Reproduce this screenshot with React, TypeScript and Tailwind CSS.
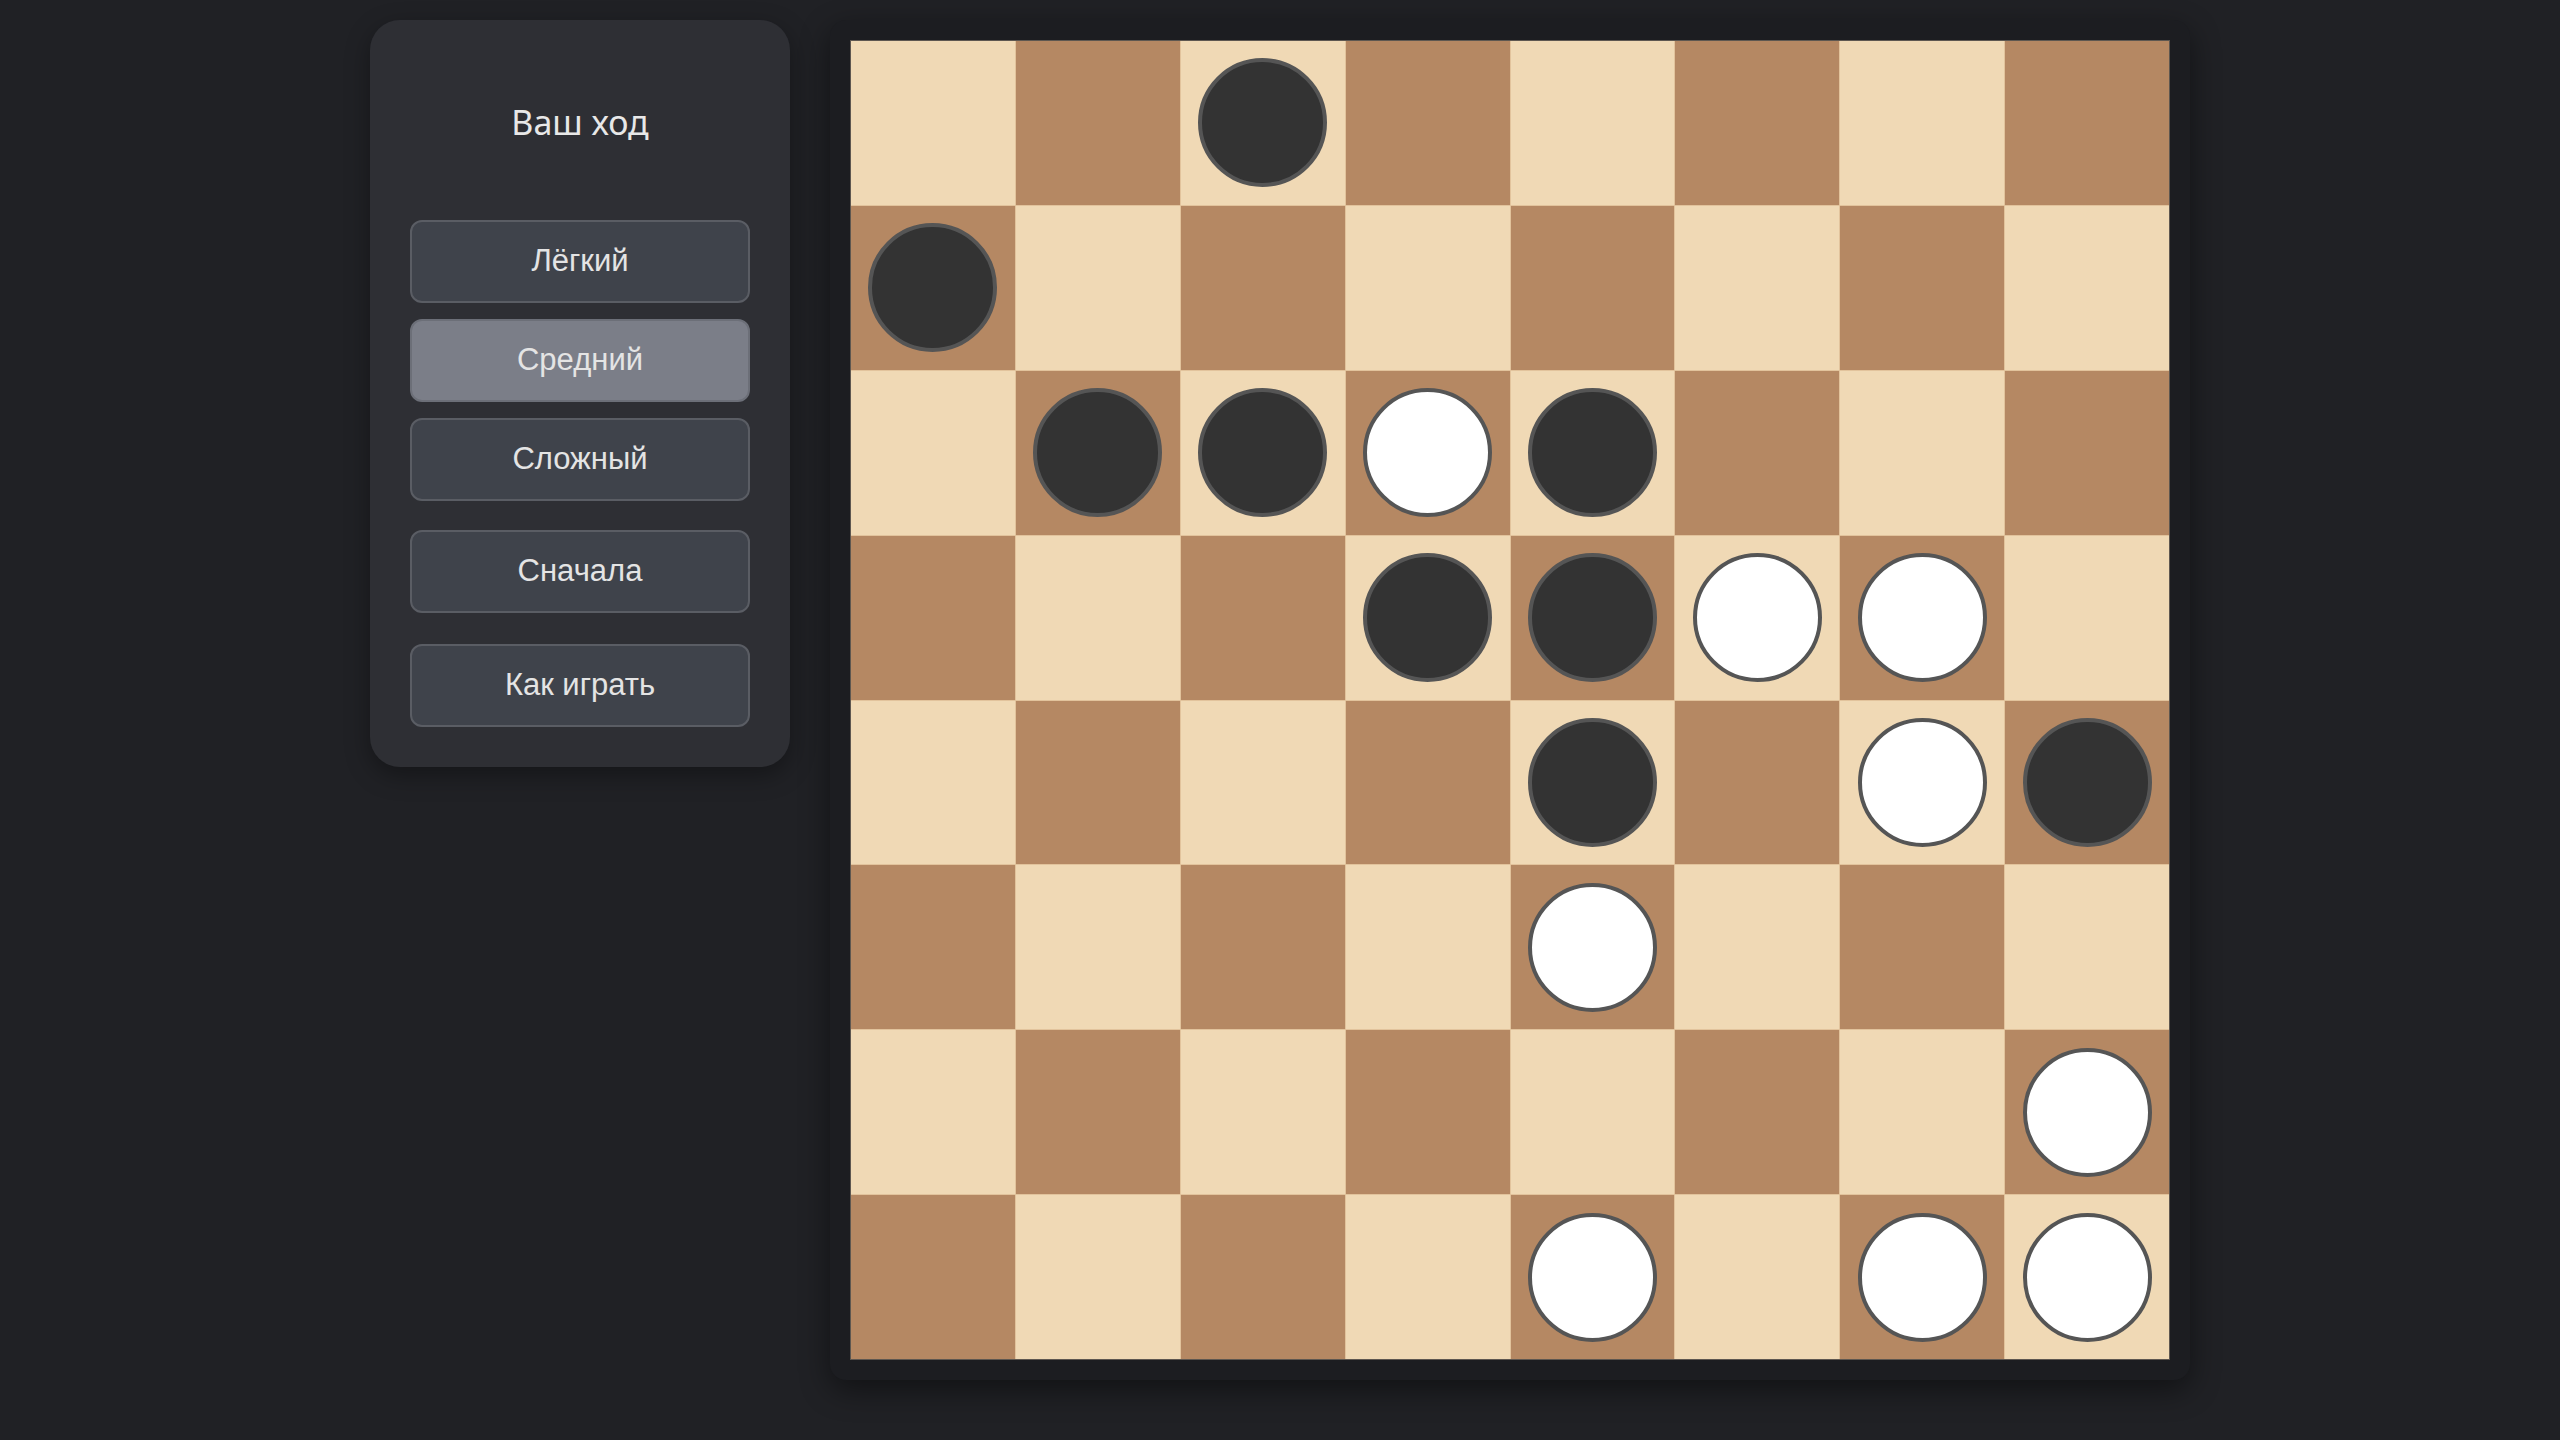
import React, { useState } from 'react';

type Piece = 'b' | 'w' | null;

// board state as seen in the current position
const initialBoard: Piece[][] = [
  [null, null, 'b', null, null, null, null, null],
  ['b', null, null, null, null, null, null, null],
  [null, 'b', 'b', 'w', 'b', null, null, null],
  [null, null, null, 'b', 'b', 'w', 'w', null],
  [null, null, null, null, 'b', null, 'w', 'b'],
  [null, null, null, null, 'w', null, null, null],
  [null, null, null, null, null, null, null, 'w'],
  [null, null, null, null, 'w', null, 'w', 'w'],
];

type Level = 'easy' | 'medium' | 'hard';

const levels: { id: Level; label: string }[] = [
  { id: 'easy', label: 'Лёгкий' },
  { id: 'medium', label: 'Средний' },
  { id: 'hard', label: 'Сложный' },
];

const btnBase =
  "w-full h-[83px] rounded-[12px] border-2 text-[31px] text-[#e4e4e4] font-['Liberation_Sans',Arial,sans-serif] flex items-center justify-center transition-colors";

const Sidebar: React.FC<{ level: Level; setLevel: (l: Level) => void; onReset: () => void }> = ({ level, setLevel, onReset }) => (
  <div className="w-[420px] rounded-[30px] bg-[#2e2f34] px-10 pt-10 pb-10 shadow-[0_8px_24px_rgba(0,0,0,0.35)]">
    <div className="h-[124px] mb-9 flex items-center justify-center text-[34px] text-[#e8e8e8] font-['Noto_Sans','Open_Sans',sans-serif]">
      Ваш ход
    </div>
    <div className="flex flex-col gap-4">
      {levels.map((l) => (
        <button
          key={l.id}
          onClick={() => setLevel(l.id)}
          className={`${btnBase} ${level === l.id ? 'bg-[#7b7e88] border-[#6c6f78]' : 'bg-[#3f434b] border-[#5a5d64]'}`}
        >
          {l.label}
        </button>
      ))}
    </div>
    <button onClick={onReset} className={`${btnBase} mt-[29px] bg-[#3f434b] border-[#5a5d64]`}>
      Сначала
    </button>
    <button className={`${btnBase} mt-[31px] bg-[#3f434b] border-[#5a5d64]`}>
      Как играть
    </button>
  </div>
);

const Board: React.FC<{ board: Piece[][] }> = ({ board }) => (
  <div className="rounded-[16px] bg-[#1c1d21] p-5 shadow-[0_10px_30px_rgba(0,0,0,0.45)]">
    <div className="w-[1320px] h-[1320px] border border-[#5e5750] bg-[#e2c39c] grid grid-cols-8 grid-rows-8 gap-px">
      {board.map((row, r) =>
        row.map((p, c) => (
          <div
            key={`${r}-${c}`}
            className={`flex items-center justify-center ${(r + c) % 2 === 0 ? 'bg-[#f0d9b5]' : 'bg-[#b58863]'}`}
          >
            {p && (
              <div
                className={`w-[129px] h-[129px] rounded-full border-[4px] border-[#555555] ${p === 'b' ? 'bg-[#333333]' : 'bg-white'}`}
              />
            )}
          </div>
        ))
      )}
    </div>
  </div>
);

const App: React.FC = () => {
  const [level, setLevel] = useState<Level>('medium');
  const [board, setBoard] = useState<Piece[][]>(initialBoard);

  return (
    <div className="min-h-screen w-full bg-[#202125] flex justify-center items-start gap-10 pt-5">
      <Sidebar level={level} setLevel={setLevel} onReset={() => setBoard(initialBoard)} />
      <Board board={board} />
    </div>
  );
};

export default App;
